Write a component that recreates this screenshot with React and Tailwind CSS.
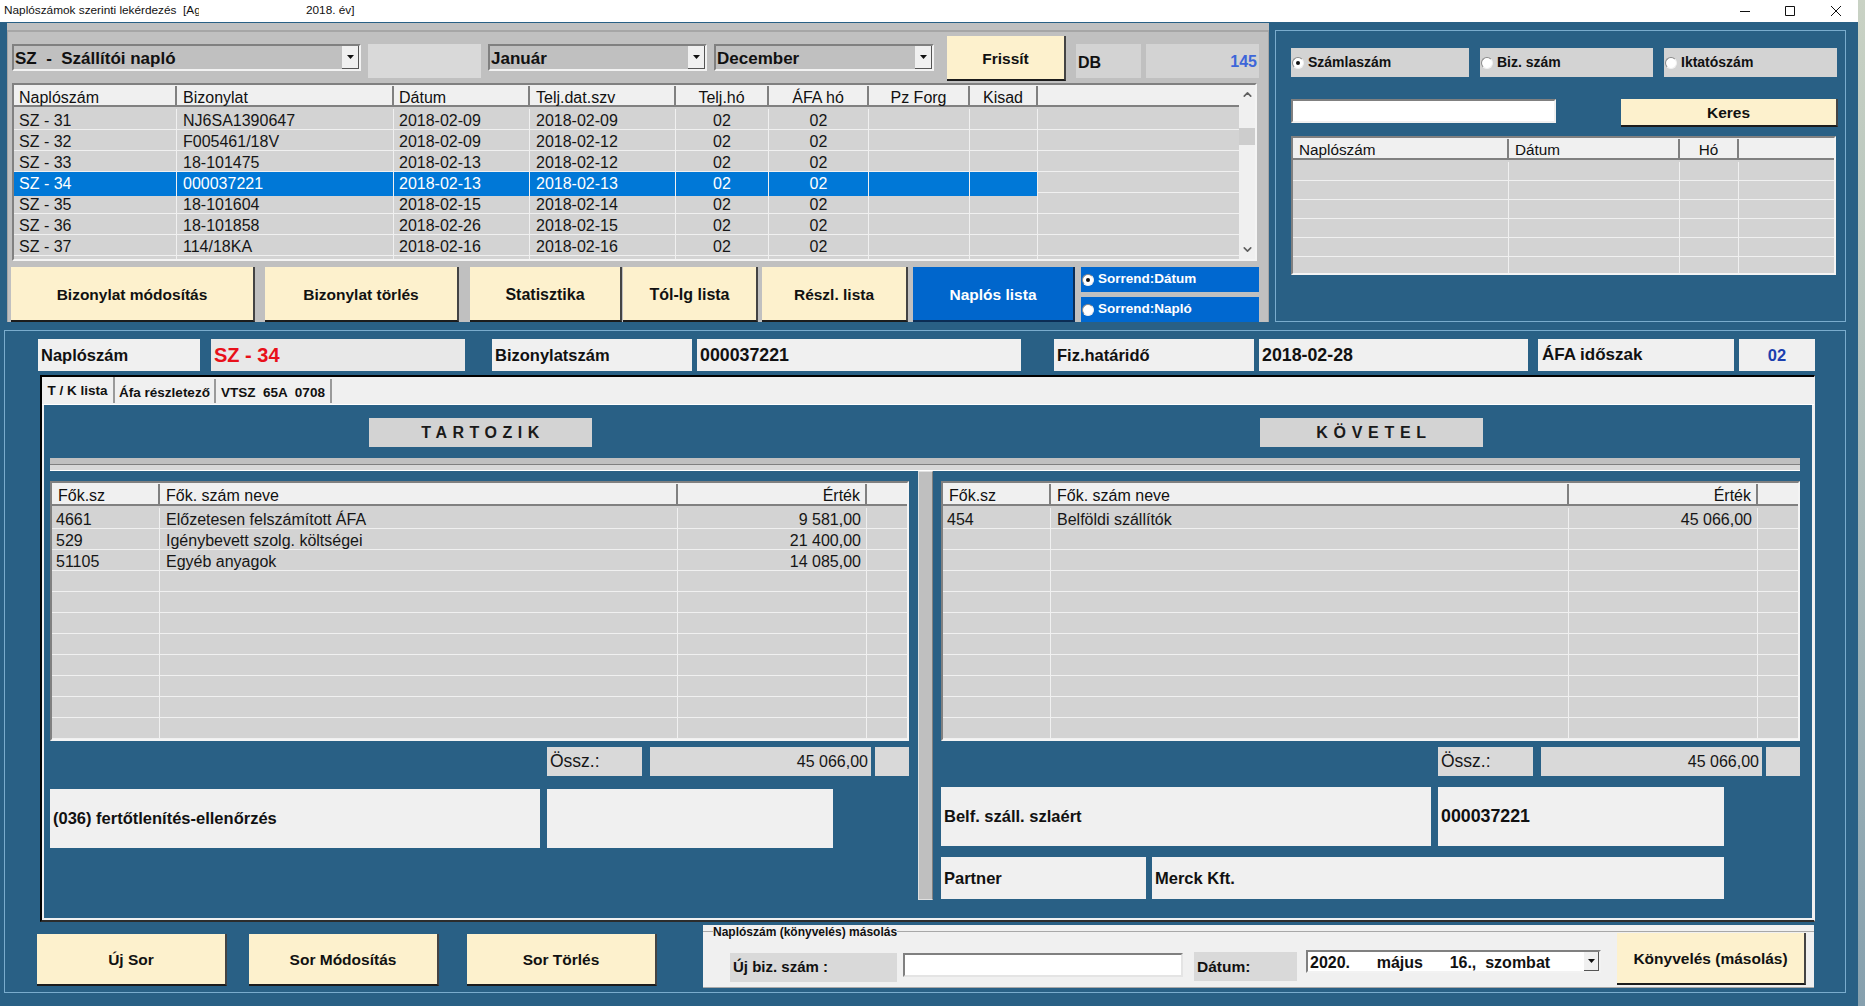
import { ChevronUp, ChevronDown } from "lucide-react";

const journalRows = [
  ["SZ - 31", "NJ6SA1390647", "2018-02-09", "2018-02-09", "02", "02", "", "", ""],
  ["SZ - 32", "F005461/18V", "2018-02-09", "2018-02-12", "02", "02", "", "", ""],
  ["SZ - 33", "18-101475", "2018-02-13", "2018-02-12", "02", "02", "", "", ""],
  ["SZ - 34", "000037221", "2018-02-13", "2018-02-13", "02", "02", "", "", ""],
  ["SZ - 35", "18-101604", "2018-02-15", "2018-02-14", "02", "02", "", "", ""],
  ["SZ - 36", "18-101858", "2018-02-26", "2018-02-15", "02", "02", "", "", ""],
  ["SZ - 37", "114/18KA", "2018-02-16", "2018-02-16", "02", "02", "", "", ""],
  ["", "", "", "", "", "", "", "", ""],
];

const blank = (n, c) => Array.from({ length: n }, () => Array(c).fill(""));

const tartozikRows = [
  ["4661", "Előzetesen felszámított ÁFA", "9 581,00", ""],
  ["529", "Igénybevett szolg. költségei", "21 400,00", ""],
  ["51105", "Egyéb anyagok", "14 085,00", ""],
  ...blank(8, 4),
];

const kovetelRows = [["454", "Belföldi szállítók", "45 066,00", ""], ...blank(10, 4)];

const DownTriangle = () => (
  <svg width="7" height="4" viewBox="0 0 7 4">
    <path d="M0 0h7L3.5 4z" fill="#111" />
  </svg>
);

const Combo = ({ label, className, text = "text-[17px] font-bold", btn = "h-[23px] w-[17px]" }) => (
  <div
    className={`flex items-center justify-between border-2 border-t-[#808080] border-l-[#808080] border-r-[#f2f2f2] border-b-[#f2f2f2] pl-[1px] ${className}`}
  >
    <span className={`whitespace-pre pt-[2px] text-[#111] ${text}`}>{label}</span>
    <span
      className={`flex items-center justify-center border-r border-b border-r-[#555] border-b-[#555] bg-[#f0f0f0] ${btn}`}
    >
      <DownTriangle />
    </span>
  </div>
);

const Btn = ({ children, className }) => (
  <button
    className={`flex items-center justify-center border-r-2 border-b-2 border-r-[#444] border-b-[#1c1c1c] bg-[#fdf1cd] pt-[2px] text-[15.5px] font-bold text-[#111] ${className}`}
  >
    {children}
  </button>
);

const Radio = ({ checked }) => (
  <span className="flex h-[12px] w-[12px] shrink-0 items-center justify-center rounded-full border border-[#f0f0f0] border-t-[#8a8a8a] border-l-[#8a8a8a] bg-white">
    {checked && <span className="h-[4px] w-[4px] rounded-full bg-[#111]" />}
  </span>
);

const Label = ({ children, className }) => (
  <div className={`flex items-center whitespace-pre ${className}`}>{children}</div>
);

const cellAlign = {
  first: "pl-[5px]",
  tight: "pl-[4px]",
  start: "pl-[6px]",
  center: "justify-center",
  end: "justify-end pr-[5px]",
};

const DataGrid = ({ cols, headers, heads, aligns, rows, rowH, headH, selected, size = "text-[16px]", className }) => (
  <div className={`flex flex-col ${className}`}>
    <div className={`grid ${cols} ${headH} shrink-0 border-b-2 border-[#808080] bg-[#f0f0f0] pt-px ${size} text-[#111]`}>
      {headers.map((h, i) => (
        <div
          key={i}
          className={`flex items-center border-r-2 border-[#808080] last:border-r-0 ${cellAlign[(heads || aligns)[i]]}`}
        >
          {h}
        </div>
      ))}
    </div>
    <div className={`min-h-0 flex-1 overflow-hidden bg-[#d3d3d3] pt-[2px] ${size} text-[#161616]`}>
      {rows.map((row, r) => (
        <div key={r} className={`grid ${cols} ${rowH} border-b border-[#f0f0f0]`}>
          {row.map((v, i) => {
            const on = r === selected && i < row.length - 1;
            return (
              <div
                key={i}
                className={`flex items-center border-r border-[#f0f0f0] last:border-r-0 ${on ? "bg-[#0078d7] text-white" : ""} ${cellAlign[aligns[i]]}`}
              >
                {v}
              </div>
            );
          })}
        </div>
      ))}
    </div>
  </div>
);

const LedgerGrid = ({ rows }) => (
  <div className="h-[260px] border-2 border-t-[#808080] border-l-[#808080] border-r-[#f4f4f4] border-b-[#f4f4f4]">
    <DataGrid
      className="h-full"
      cols="grid-cols-[108px_518px_189px_1fr]"
      headers={["Fők.sz", "Fők. szám neve", "Érték", ""]}
      heads={["start", "start", "end", "start"]}
      aligns={["tight", "start", "end", "start"]}
      rows={rows}
      rowH="h-[21px]"
      headH="h-[23px]"
    />
  </div>
);

const Summary = ({ indent }) => (
  <div className={`mt-[6px] flex h-[29px] text-[16px] text-[#161616] ${indent}`}>
    <Label className="w-[95px] bg-[#d9d9d9] pl-[3px] text-[17.5px]">Össz.:</Label>
    <Label className="ml-[8px] w-[221px] justify-end bg-[#d9d9d9] pr-[3px]">45 066,00</Label>
    <div className="ml-[4px] w-[34px] bg-[#d9d9d9]" />
  </div>
);

export default function App() {
  return (
    <div className="flex h-screen w-full overflow-hidden font-['Liberation_Sans',sans-serif]">
      <div className="flex h-full w-[1858px] flex-col bg-[#296085]">
        <div className="flex h-[22px] shrink-0 items-center bg-white pl-[4px] text-[11.8px] text-[#111]">
          <span className="w-[195px] shrink-0 overflow-hidden whitespace-pre">Naplószámok szerinti lekérdezés  [Ag</span>
          <span className="ml-[107px] w-[46px] shrink-0 whitespace-nowrap">2018. év]</span>
          <svg className="ml-[1388px] shrink-0" width="10" height="10" viewBox="0 0 10 10">
            <path d="M0 5.5h10" stroke="#111" />
          </svg>
          <svg className="ml-[35px] shrink-0" width="10" height="10" viewBox="0 0 10 10">
            <path d="M.5.5h9v9h-9z" fill="none" stroke="#111" />
          </svg>
          <svg className="ml-[36px] shrink-0" width="10" height="10" viewBox="0 0 10 10">
            <path d="M0 0l10 10M10 0L0 10" stroke="#111" />
          </svg>
        </div>

        <div className="flex h-[301px] shrink-0">
          {/* journal list */}
          <div className="ml-[7px] mt-[1px] h-[299px] w-[1262px] bg-[#c0c0c0] pt-[7px]">
            <div className="h-[292px] border-x border-t-2 border-[#a6a6a6] pl-[4px]">
              <div className="flex h-[51px] items-start pt-[4px]">
                <Combo label="SZ  -  Szállítói napló" className="mt-[8px] h-[27px] w-[349px]" />
                <div className="ml-[7px] mt-[8px] h-[34px] w-[113px] bg-[#d9d9d9]" />
                <Combo label="Január" className="ml-[7px] mt-[8px] h-[27px] w-[219px]" />
                <Combo label="December" className="ml-[7px] mt-[8px] h-[27px] w-[220px]" />
                <Btn className="ml-[13px] h-[45px] w-[119px]">Frissít</Btn>
                <Label className="ml-[10px] mt-[8px] h-[34px] w-[65px] bg-[#d3d3d3] pl-[2px] pt-[3px] text-[16px] font-bold text-[#111]">
                  DB
                </Label>
                <Label className="ml-[5px] mt-[8px] h-[34px] w-[113px] justify-end bg-[#d3d3d3] pr-[2px] pt-[2px] text-[16px] font-bold text-[#3d66d9]">
                  145
                </Label>
              </div>

              <div className="flex h-[178px] w-[1245px] border-2 border-t-[#808080] border-l-[#808080] border-r-[#f4f4f4] border-b-[#f4f4f4]">
                <DataGrid
                  className="w-[1225px]"
                  cols="grid-cols-[163px_217px_136px_146px_93px_100px_101px_68px_1fr]"
                  headers={["Naplószám", "Bizonylat", "Dátum", "Telj.dat.szv", "Telj.hó", "ÁFA hó", "Pz Forg", "Kisad", ""]}
                  aligns={["first", "start", "first", "start", "center", "center", "center", "center", "start"]}
                  rows={journalRows}
                  rowH="h-[21px]"
                  headH="h-[22px]"
                  selected={3}
                />
                <div className="flex w-[16px] flex-col items-center bg-[#f0f0f0] text-[#606060]">
                  <ChevronUp className="mt-[3px]" size={13} strokeWidth={3} />
                  <div className="mt-[27px] h-[17px] w-full bg-[#cdcdcd]" />
                  <ChevronDown className="mb-[3px] mt-auto" size={13} strokeWidth={3} />
                </div>
              </div>

              <div className="-ml-px mt-[6px] flex h-[55px]">
                <Btn className="w-[244px]">Bizonylat módosítás</Btn>
                <Btn className="ml-[10px] w-[194px]">Bizonylat törlés</Btn>
                <Btn className="ml-[11px] w-[152px] text-[16px]">Statisztika</Btn>
                <Btn className="ml-[1px] w-[135px] text-[16px]">Tól-Ig lista</Btn>
                <Btn className="ml-[4px] w-[146px]">Részl. lista</Btn>
                <button className="ml-[5px] flex w-[162px] items-center justify-center border-r-2 border-b-2 border-r-[#0b2d55] border-b-[#0b2d55] bg-[#0066cc] pt-[2px] text-[15.5px] font-bold text-white">
                  Naplós lista
                </button>
                <div className="ml-[6px] flex w-[178px] flex-col justify-between text-[13.5px] font-bold text-white">
                  <Label className="h-[25px] gap-[4px] bg-[#0068d0] pl-[1px]">
                    <Radio checked />
                    Sorrend:Dátum
                  </Label>
                  <Label className="h-[25px] gap-[4px] bg-[#0068d0] pl-[1px]">
                    <Radio />
                    Sorrend:Napló
                  </Label>
                </div>
              </div>
            </div>
          </div>

          {/* search */}
          <div className="ml-[6px] mt-[8px] h-[292px] w-[571px] border border-[#7aaccd] pl-[15px]">
            <div className="mt-[17px] flex h-[29px] gap-[11px] text-[14px] font-bold text-[#111]">
              <Label className="w-[178px] gap-[4px] bg-[#d3d3d3] pl-[1px]">
                <Radio checked />
                Számlaszám
              </Label>
              <Label className="w-[173px] gap-[4px] bg-[#d3d3d3] pl-[1px]">
                <Radio />
                Biz. szám
              </Label>
              <Label className="w-[173px] gap-[4px] bg-[#d3d3d3] pl-[1px]">
                <Radio />
                Iktatószám
              </Label>
            </div>
            <div className="mt-[22px] flex items-start">
              <div className="h-[24px] w-[265px] border-2 border-t-[#808080] border-l-[#808080] border-r-[#f0f0f0] border-b-[#f0f0f0] bg-white" />
              <Btn className="ml-[65px] h-[28px] w-[217px]">Keres</Btn>
            </div>
            <div className="mt-[9px] h-[139px] w-[545px] border-2 border-t-[#808080] border-l-[#808080] border-r-[#f4f4f4] border-b-[#f4f4f4]">
              <DataGrid
                className="h-full"
                size="text-[15.3px]"
                cols="grid-cols-[216px_171px_59px_1fr]"
                headers={["Naplószám", "Dátum", "Hó", ""]}
                aligns={["start", "start", "center", "start"]}
                rows={blank(6, 4)}
                rowH="h-[19px]"
                headH="h-[22px]"
              />
            </div>
          </div>
        </div>

        {/* detail */}
        <div className="ml-[4px] mt-[7px] h-[663px] w-[1842px] shrink-0 border border-[#7aaccd]">
          <div className="ml-[33px] mt-[8px] flex h-[32px] text-[16.5px] font-bold text-[#111]">
            <Label className="w-[162px] bg-[#f0f0f0] pl-[3px] text-[16.5px]">Naplószám</Label>
            <Label className="ml-[11px] w-[254px] bg-[#e8e8e8] pl-[3px] text-[20px] text-[#e8101a]">SZ - 34</Label>
            <Label className="ml-[27px] w-[200px] bg-[#f0f0f0] pl-[3px]">Bizonylatszám</Label>
            <Label className="ml-[5px] w-[324px] bg-[#f0f0f0] pl-[3px] text-[17.8px]">000037221</Label>
            <Label className="ml-[33px] w-[200px] bg-[#f0f0f0] pl-[3px]">Fiz.határidő</Label>
            <Label className="ml-[5px] w-[269px] bg-[#f0f0f0] pl-[3px] text-[17.8px]">2018-02-28</Label>
            <Label className="ml-[10px] w-[196px] bg-[#f0f0f0] pl-[4px] text-[17px]">ÁFA időszak</Label>
            <Label className="ml-[5px] w-[76px] justify-center bg-[#f0f0f0] text-[#1c3fae]">02</Label>
          </div>

          <div className="ml-[35px] mt-[4px] h-[547px] w-[1775px] border-t-2 border-l-2 border-r border-b-2 border-t-black border-l-black border-r-[#f0f0f0] border-b-[#2c2c2c] bg-[#f0f0f0]">
            <div className="flex h-[28px] items-end border-b border-white pb-px text-[13.5px] font-bold text-[#111]">
              <Label className="h-[26px] w-[73px] justify-center border-r-2 border-[#9a9a9a] pt-[2px]">T / K lista</Label>
              <Label className="h-[24px] w-[101px] justify-center border-r-2 border-[#9a9a9a] pt-[5px]">Áfa részletező</Label>
              <Label className="h-[24px] w-[116px] justify-center border-r-2 border-[#9a9a9a] pt-[5px]">VTSZ  65A  0708</Label>
            </div>
            <div className="ml-[2px] h-[513px] w-[1768px] bg-[#296085]">
              <div className="flex pt-[13px] text-[16px] font-bold text-[#1a1a1a]">
                <Label className="ml-[325px] h-[29px] w-[223px] justify-center bg-[#d3d3d3] pl-[5px] tracking-[5.5px]">TARTOZIK</Label>
                <Label className="ml-[668px] h-[29px] w-[223px] justify-center bg-[#d3d3d3] pl-[5px] tracking-[5.7px]">KÖVETEL</Label>
              </div>
              <div className="ml-[6px] mt-[11px] w-[1750px]">
                <div className="h-[6px] bg-[#c0c0c0]" />
                <div className="h-[7px] border-y border-t-[#808080] border-b-white bg-[#d8d8d8]" />
              </div>
              <div className="flex">
                <div className="ml-[6px] w-[859px] pt-[10px]">
                  <LedgerGrid rows={tartozikRows} />
                  <Summary indent="ml-[497px]" />
                  <div className="mt-[13px] flex h-[59px] gap-[7px] text-[16.5px] font-bold text-[#111]">
                    <Label className="w-[490px] bg-[#f0f0f0] pl-[3px]">(036) fertőtlenítés-ellenőrzés</Label>
                    <div className="w-[286px] bg-[#f0f0f0]" />
                  </div>
                </div>
                <div className="ml-[9px] h-[429px] w-[15px] border border-[#e0e0e0] border-r-[#808080] bg-[#bfbfbf]" />
                <div className="ml-[8px] w-[859px] pt-[10px]">
                  <LedgerGrid rows={kovetelRows} />
                  <Summary indent="ml-[497px]" />
                  <div className="mt-[11px] flex h-[59px] gap-[7px] text-[16.5px] font-bold text-[#111]">
                    <Label className="w-[490px] bg-[#f0f0f0] pl-[3px]">Belf. száll. szlaért</Label>
                    <Label className="w-[286px] bg-[#f0f0f0] pl-[3px] text-[17.8px]">000037221</Label>
                  </div>
                  <div className="mt-[11px] flex h-[42px] gap-[6px] text-[16.5px] font-bold text-[#111]">
                    <Label className="w-[205px] bg-[#f0f0f0] pl-[3px]">Partner</Label>
                    <Label className="w-[572px] bg-[#f0f0f0] pl-[3px]">Merck Kft.</Label>
                  </div>
                </div>
              </div>
            </div>
          </div>

          <div className="ml-[32px] mt-[3px] flex items-start">
            <Btn className="mt-[9px] h-[52px] w-[190px]">Új Sor</Btn>
            <Btn className="ml-[22px] mt-[9px] h-[52px] w-[190px]">Sor Módosítás</Btn>
            <Btn className="ml-[28px] mt-[9px] h-[52px] w-[190px]">Sor Törlés</Btn>
            <div className="ml-[46px] h-[63px] w-[1111px] bg-[#f0f0f0] pt-[6px]">
              <div className="h-[57px] border-y border-[#a8a8a8]">
                <div className="-mt-[7px] ml-[10px] h-[14px] w-fit bg-[#f0f0f0] text-[12px] font-bold leading-[14px] text-[#111]">
                  Naplószám (könyvelés) másolás
                </div>
                <div className="-mt-[6px] flex items-start text-[15.5px] font-bold text-[#111]">
                  <Label className="ml-[27px] mt-[20px] h-[29px] w-[167px] bg-[#d9d9d9] pl-[3px] text-[15px]">Új biz. szám :</Label>
                  <div className="ml-[6px] mt-[20px] h-[24px] w-[280px] border-2 border-t-[#808080] border-l-[#808080] border-r-[#e4e4e4] border-b-[#e4e4e4] bg-white" />
                  <Label className="ml-[11px] mt-[19px] h-[29px] w-[103px] bg-[#d9d9d9] pl-[3px]">Dátum:</Label>
                  <Combo
                    label="2020.      május      16.,  szombat"
                    text="pl-px text-[16px]"
                    btn="h-[19px] w-[15px]"
                    className="ml-[9px] mt-[17px] h-[23px] w-[295px] bg-white"
                  />
                  <Btn className="ml-[16px] h-[52px] w-[189px]">Könyvelés (másolás)</Btn>
                </div>
              </div>
            </div>
          </div>
        </div>
      </div>
      <div className="h-full flex-1 bg-linear-to-b from-[#c9d2c4] to-[#86a0ae]" />
    </div>
  );
}
